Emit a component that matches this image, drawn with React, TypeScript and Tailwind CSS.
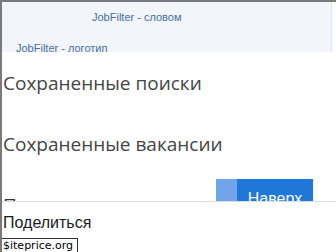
import React from "react";

export default function App() {
  return (
    <div className="relative w-[336px] h-[252px] overflow-hidden bg-white border-l-2 border-t-2 border-[#7a7a7a]">
      {/* header */}
      <div className="w-[330px] h-[50px] overflow-hidden bg-[#f2f5f9] border-r border-[#e2e5ea] flex flex-col font-['Liberation_Sans',Arial,sans-serif] text-[11px] leading-[13px] text-[#46709f]">
        <div className="pt-[9px] pl-[90px]">JobFilter - словом</div>
        <div className="pt-[18px] pl-[14px]">JobFilter - логотип</div>
      </div>

      {/* scroll area */}
      <div className="relative h-[149px] overflow-hidden">
        <ul className="flex flex-col gap-[34px] pt-[18px] pl-[1px] font-['Open_Sans',sans-serif] text-[19px] leading-[27px] text-[#444444]">
          <li>Сохраненные поиски</li>
          <li>Сохраненные вакансии</li>
          <li className="text-[#333333]">Подписки</li>
        </ul>
        <div className="absolute left-[214px] top-[127px] w-[97px] h-[34px] flex">
          <div className="w-[21px] bg-[#6fa4e9]" />
          <div className="flex-1 bg-[#1f78d9] text-white font-['Liberation_Sans',Arial,sans-serif] text-[16px] leading-[20px] flex justify-center pt-[10px]">
            Наверх
          </div>
        </div>
      </div>

      {/* bottom bar */}
      <div className="border-t border-[#dcdcdc] pt-[11px] pl-[1px] font-['Liberation_Sans',Arial,sans-serif] text-[16px] leading-[20px] text-[#1a1a1a]">
        Поделиться
      </div>

      <div className="absolute left-[-2px] top-[236px] w-[78px] h-[17px] bg-white border border-[#333] pl-[2px] font-['DejaVu_Sans',sans-serif] text-[11px] leading-[13px] text-black">
        $iteprice.org
      </div>
    </div>
  );
}
